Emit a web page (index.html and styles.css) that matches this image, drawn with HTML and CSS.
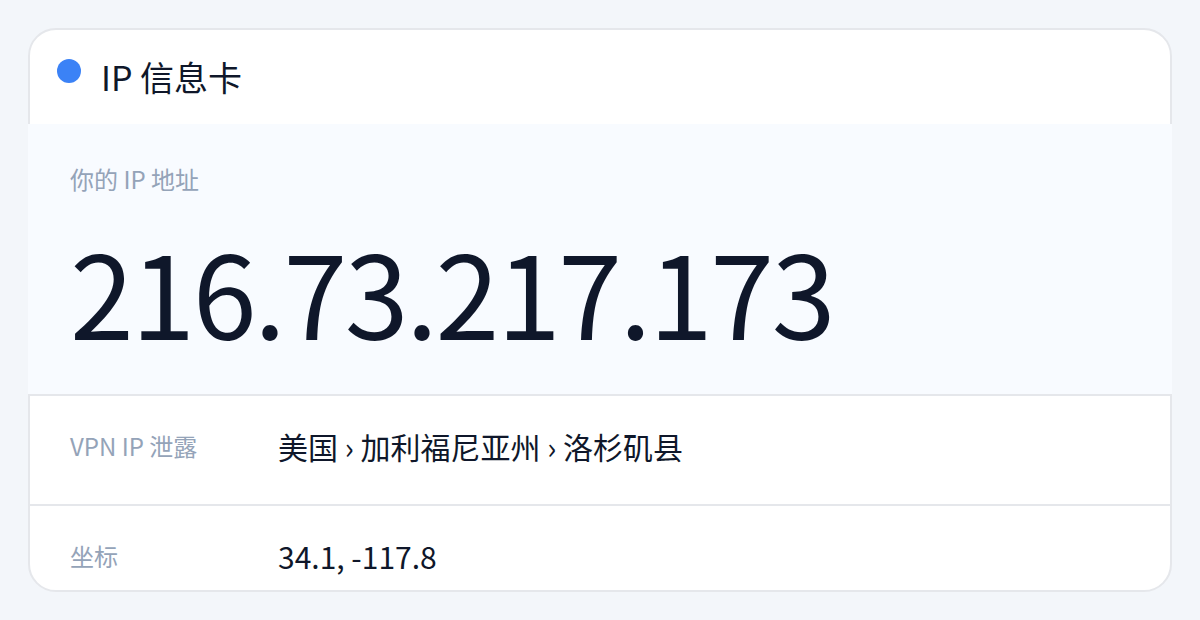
FILE: index.html
```html
<!DOCTYPE html>
<html lang="zh-CN"><head><meta charset="utf-8"><title>IP 信息卡</title><link rel="stylesheet" href="styles.css"></head>
<body>
<div class="card">
  <div class="card-header">
    <span class="dot"></span>
    <h1 class="title">IP 信息卡</h1>
  </div>
  <div class="hero">
    <div class="hero-label">你的 IP 地址</div>
    <div class="hero-ip">216.73.217.173</div>
  </div>
  <div class="row">
    <div class="row-label">VPN IP 泄露</div>
    <div class="row-value">美国 › 加利福尼亚州 › 洛杉矶县</div>
  </div>
  <div class="row row-last">
    <div class="row-label">坐标</div>
    <div class="row-value">34.1, -117.8</div>
  </div>
</div>
</body></html>
```
FILE: styles.css
```css
html,body{margin:0;padding:0;}
body{
  background:#f3f6fa;
  font-family:"Noto Sans CJK SC","Noto Sans",sans-serif;
  color:#0f172a;
  padding:28px;
}
.card{
  background:#fff;
  border:2px solid #e5e7eb;
  border-radius:28px;
  box-sizing:border-box;
  height:564px;
}
.card-header{
  display:flex;
  align-items:flex-start;
  gap:20px;
  padding:27px 26px 27px 27px;
}
.dot{
  width:24px;height:24px;border-radius:50%;
  background:#3b82f6;
  margin-top:2px;
  flex:none;
}
.title{
  margin:0;
  font-size:34px;
  line-height:40px;
  font-weight:400;
}
.hero{
  background:#f8fbff;
  margin:0 -2px;
  padding:39px 42px 44px;
}
.hero-label{
  font-size:24px;
  line-height:32px;
  color:#94a3b8;
}
.hero-ip{
  margin-top:35px;
  font-size:115px;
  line-height:120px;
  letter-spacing:-2.5px;
}
.row{
  display:flex;
  align-items:center;
  border-top:2px solid #e5e7eb;
  padding:30px 40px 38px;
}
.row-last{padding-bottom:14px;}
.row-label{
  width:208px;
  flex:none;
  font-size:24px;
  line-height:40px;
  color:#94a3b8;
}
.row-value{
  font-size:30px;
  line-height:40px;
  font-variant-numeric:tabular-nums;
}
```
